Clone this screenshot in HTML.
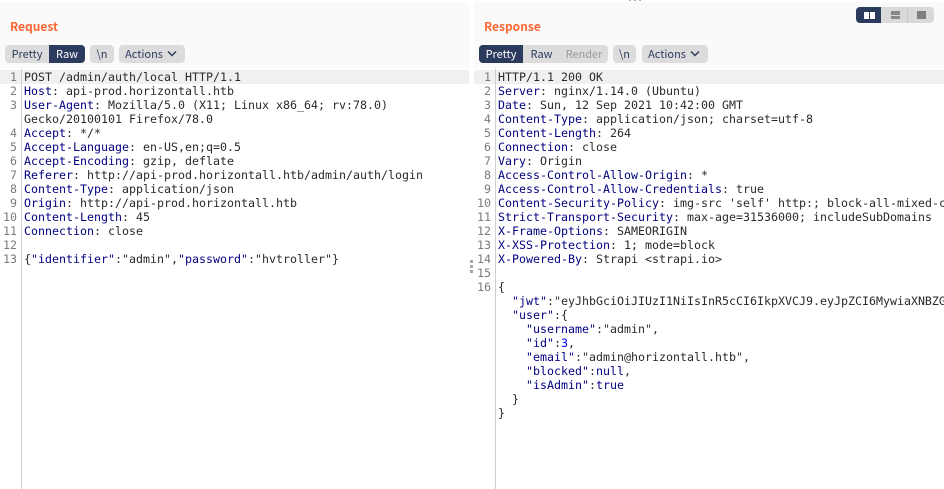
<!DOCTYPE html>
<html><head><meta charset="utf-8">
<style>
html,body{margin:0;padding:0;background:#fff;}
body{width:944px;height:489px;overflow:hidden;position:relative;font-family:"Noto Sans CJK JP","Liberation Sans",sans-serif;}
.a{position:absolute;}
.hd{top:2px;height:66px;background:#fafafa;}
.title{top:18px;font-size:12px;line-height:18px;font-weight:700;color:#ff6633;}
.grp{top:45px;height:18px;background:#dcdcdc;border-radius:4px;display:flex;overflow:hidden;font-size:11px;line-height:18px;color:#2b3a5c;}
.grp span{display:block;text-align:center;height:18px;}
.on{background:#2c3a5e;color:#fff;}
.dis{color:#9a9a9a;}
.gut{top:69px;height:420px;width:1px;border-left:1px solid #cfcfcf;}
.hl{top:70px;height:14px;background:#f0f0f0;}
pre{position:absolute;margin:0;top:70px;font:11.63px/14px "DejaVu Sans Mono",monospace;color:#2a2a2a;white-space:pre;}
.n{color:#7a7a7a;text-align:right;}
b{font-weight:400;color:#000080;}
i{font-style:normal;color:#0000ff;}
.clip{left:498px;width:446px;overflow:hidden;}
</style></head><body>
<div class="a hd" style="left:0;width:469px"></div>
<div class="a hd" style="left:474px;width:470px"></div>
<div class="a title" style="left:10px">Request</div>
<div class="a title" style="left:484px">Response</div>

<div class="a grp" style="left:5px;width:80px"><span style="width:44px">Pretty</span><span class="on" style="width:36px">Raw</span></div>
<div class="a grp" style="left:90px;width:24px"><span style="width:24px">\n</span></div>
<div class="a grp" style="left:119px;width:66px"><span style="width:50px;padding-left:0">Actions</span></div>
<svg class="a" style="left:166px;top:50px" width="12" height="8" viewBox="0 0 12 8"><path d="M2 1.5L6 5.5L10 1.5" fill="none" stroke="#2b3a5c" stroke-width="1.5"/></svg>

<div class="a grp" style="left:479px;width:129px"><span class="on" style="width:44px">Pretty</span><span style="width:37px">Raw</span><span class="dis" style="width:48px">Render</span></div>
<div class="a grp" style="left:613px;width:23px"><span style="width:23px">\n</span></div>
<div class="a grp" style="left:642px;width:66px"><span style="width:50px;padding-left:0">Actions</span></div>
<svg class="a" style="left:689px;top:50px" width="12" height="8" viewBox="0 0 12 8"><path d="M2 1.5L6 5.5L10 1.5" fill="none" stroke="#2b3a5c" stroke-width="1.5"/></svg>

<div class="a" style="left:856px;top:7px;width:78px;height:16px;background:#d9d9d9;border-radius:4px;overflow:hidden">
  <div class="a" style="left:0;top:0;width:25px;height:16px;background:#2c3a5e"></div>
  <div class="a" style="left:7.5px;top:5px;width:5px;height:6.5px;background:#fff"></div>
  <div class="a" style="left:13.5px;top:5px;width:5px;height:6.5px;background:#fff"></div>
  <div class="a" style="left:51px;top:0;width:1px;height:16px;background:#c8c8c8"></div>
  <div class="a" style="left:35px;top:4px;width:9px;height:3.5px;background:#888"></div>
  <div class="a" style="left:35px;top:8.5px;width:9px;height:3.5px;background:#888"></div>
  <div class="a" style="left:61px;top:4px;width:9px;height:8px;background:#808080"></div>
</div>

<div class="a" style="left:629px;top:0;width:2px;height:1px;background:#aaa"></div>
<div class="a" style="left:634px;top:0;width:2px;height:1px;background:#aaa"></div>
<div class="a" style="left:639px;top:0;width:2px;height:1px;background:#aaa"></div>
<div class="a" style="left:470px;top:260px;width:3px;height:3px;background:#a8a8a8"></div>
<div class="a" style="left:470px;top:265px;width:3px;height:3px;background:#a8a8a8"></div>
<div class="a" style="left:470px;top:270px;width:3px;height:3px;background:#a8a8a8"></div>

<div class="a hl" style="left:0;width:469px"></div>
<div class="a hl" style="left:474px;width:470px"></div>
<div class="a gut" style="left:21px"></div>
<div class="a gut" style="left:495px"></div>

<pre class="n" style="left:0;width:17px">1
2
3

4
5
6
7
8
9
10
11
12
13</pre>
<pre style="left:24px">POST /admin/auth/local HTTP/1.1
<b>Host</b>: api-prod.horizontall.htb
<b>User-Agent</b>: Mozilla/5.0 (X11; Linux x86_64; rv:78.0)
Gecko/20100101 Firefox/78.0
<b>Accept</b>: */*
<b>Accept-Language</b>: en-US,en;q=0.5
<b>Accept-Encoding</b>: gzip, deflate
<b>Referer</b>: http://api-prod.horizontall.htb/admin/auth/login
<b>Content-Type</b>: application/json
<b>Origin</b>: http://api-prod.horizontall.htb
<b>Content-Length</b>: 45
<b>Connection</b>: close

{<b>"identifier"</b>:"admin",<b>"password"</b>:"hvtroller"}</pre>

<pre class="n" style="left:474px;width:17px">1
2
3
4
5
6
7
8
9
10
11
12
13
14
15
16</pre>
<pre class="clip">HTTP/1.1 200 OK
<b>Server</b>: nginx/1.14.0 (Ubuntu)
<b>Date</b>: Sun, 12 Sep 2021 10:42:00 GMT
<b>Content-Type</b>: application/json; charset=utf-8
<b>Content-Length</b>: 264
<b>Connection</b>: close
<b>Vary</b>: Origin
<b>Access-Control-Allow-Origin</b>: *
<b>Access-Control-Allow-Credentials</b>: true
<b>Content-Security-Policy</b>: img-src 'self' http:; block-all-mixed-content
<b>Strict-Transport-Security</b>: max-age=31536000; includeSubDomains
<b>X-Frame-Options</b>: SAMEORIGIN
<b>X-XSS-Protection</b>: 1; mode=block
<b>X-Powered-By</b>: Strapi &lt;strapi.io&gt;

{
  <b>"jwt"</b>:"eyJhbGciOiJIUzI1NiIsInR5cCI6IkpXVCJ9.eyJpZCI6MywiaXNBZG1pbiI6dHJ1ZX0",
  <b>"user"</b>:{
    <b>"username"</b>:"admin",
    <b>"id"</b>:<i>3</i>,
    <b>"email"</b>:"admin@horizontall.htb",
    <b>"blocked"</b>:<b>null</b>,
    <b>"isAdmin"</b>:<b>true</b>
  }
}</pre>
</body></html>
